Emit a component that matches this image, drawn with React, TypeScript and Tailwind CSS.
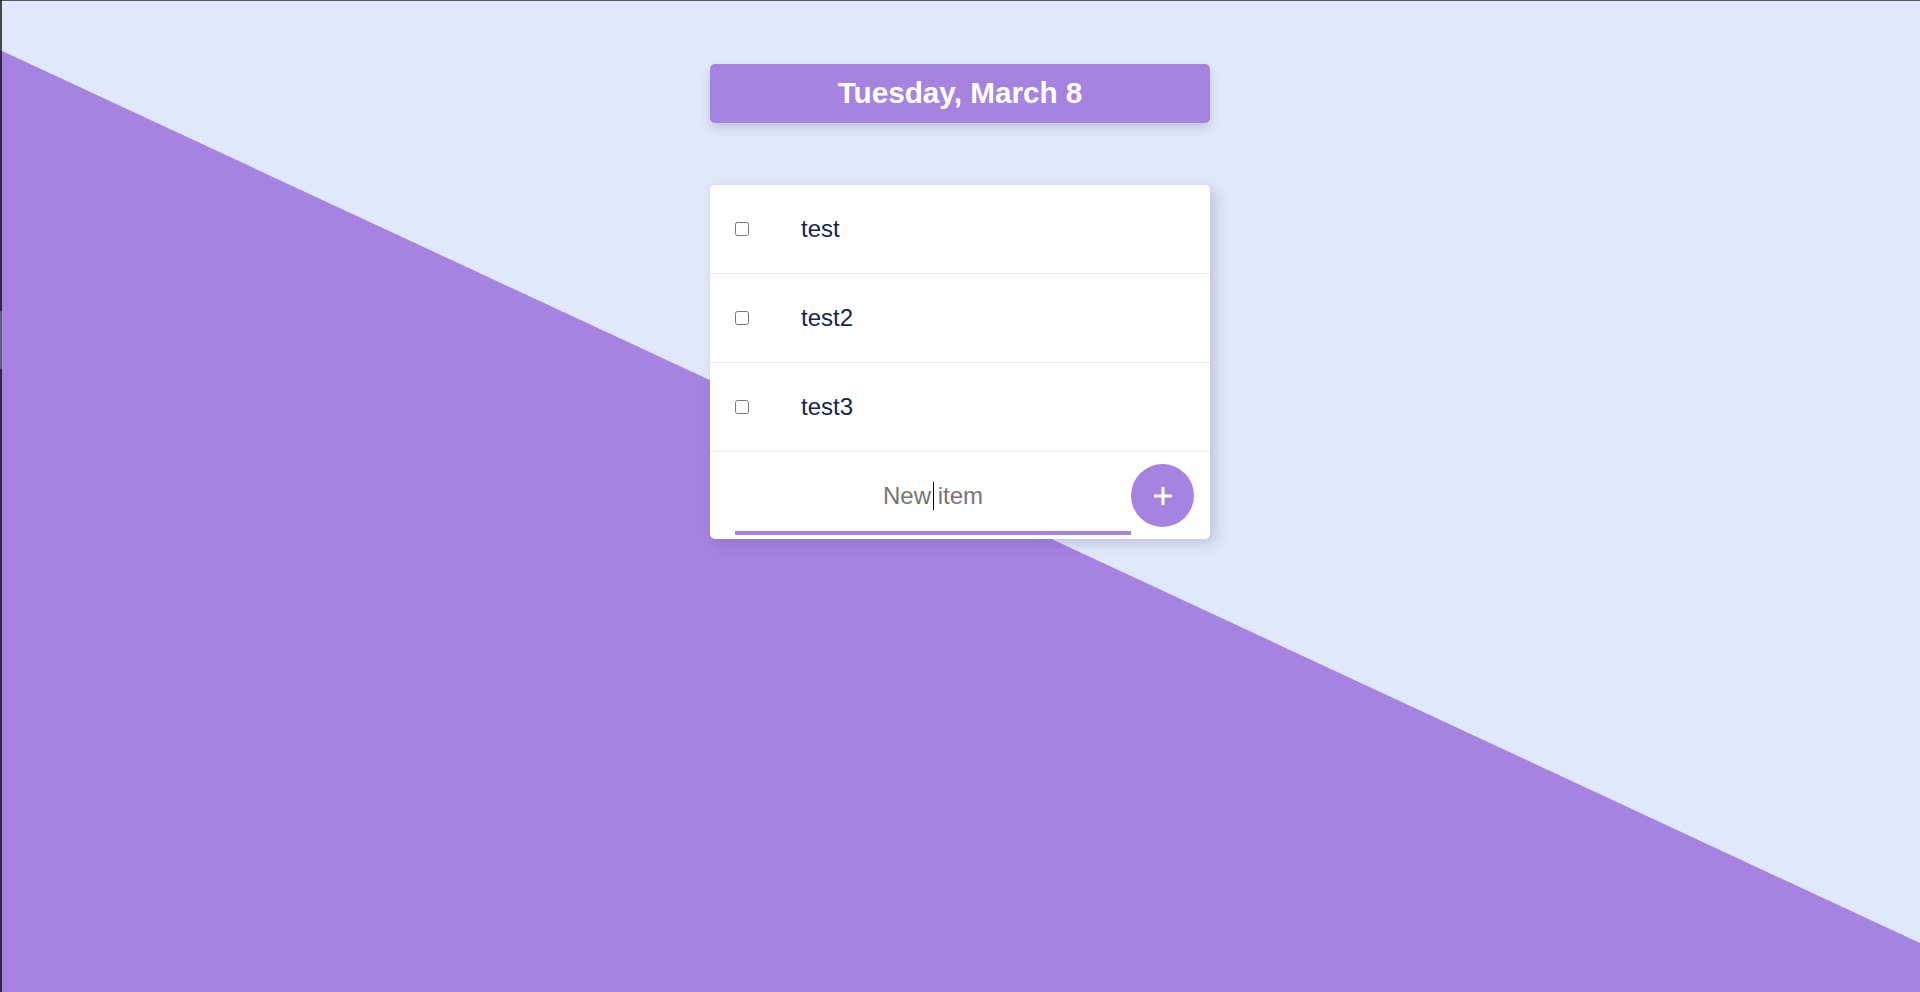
import { useState } from "react"

const items = ["test", "test2", "test3"]

function TodoRow({ label }: { label: string }) {
  const [done, setDone] = useState(false)
  return (
    <div className="flex h-[89px] items-center border-b border-[#eeeeee] pl-[25px]">
      <input
        type="checkbox"
        checked={done}
        onChange={() => setDone(!done)}
        className="m-0 h-[14px] w-[14px]"
      />
      <span className="ml-[52px] text-[24px] text-[#14244f]">{label}</span>
    </div>
  )
}

export default function App() {
  return (
    <div className="relative h-[992px] w-full overflow-hidden bg-[#e2e8fb] font-['Liberation_Sans',Arial,sans-serif]">
      {/* diagonal purple background */}
      <div className="absolute inset-0 bg-[#a683e1] [clip-path:polygon(0_50px,100%_943px,100%_100%,0_100%)]" />

      {/* window edges */}
      <div className="absolute left-0 top-0 h-px w-full bg-[#55555a]" />
      <div className="absolute left-0 top-0 h-full w-[2px] bg-black/70">
        <div className="mt-[311px] h-[58px] w-full bg-white/25" />
      </div>

      <div className="relative flex flex-col items-center pt-[64px]">
        {/* Date header */}
        <div className="flex h-[59px] w-[500px] items-center justify-center rounded-[5px] bg-[#a683e1] shadow-[0_5px_10px_rgba(60,60,110,0.2)]">
          <h1 className="text-[29.7px] font-bold text-white">Tuesday, March 8</h1>
        </div>

        {/* List */}
        <div className="mt-[62px] w-[500px] overflow-hidden rounded-[5px] bg-white shadow-[5px_4px_14px_rgba(60,60,110,0.22)]">
          {items.map((it) => (
            <TodoRow key={it} label={it} />
          ))}

          {/* New item form */}
          <div className="flex h-[87px] items-center pl-[25px] pr-[16px]">
            <div className="relative flex w-[396px] flex-col self-stretch pt-[30px]">
              <input
                type="text"
                placeholder="New item"
                className="h-[28px] w-full bg-transparent text-center text-[24px] text-[#14244f] outline-none placeholder:text-[#757575]"
              />
              <div className="absolute left-[198px] top-[30px] h-[28px] w-px bg-black" />
              <div className="mt-[21px] h-[4px] w-full bg-[#a683e1]" />
            </div>
            <button className="flex h-[63px] w-[63px] items-center justify-center rounded-full bg-[#a683e1]">
              <svg width="20" height="20" viewBox="0 0 20 20">
                <path d="M10 1v18M1 10h18" stroke="white" strokeWidth="3" />
              </svg>
            </button>
          </div>
        </div>
      </div>
    </div>
  )
}
